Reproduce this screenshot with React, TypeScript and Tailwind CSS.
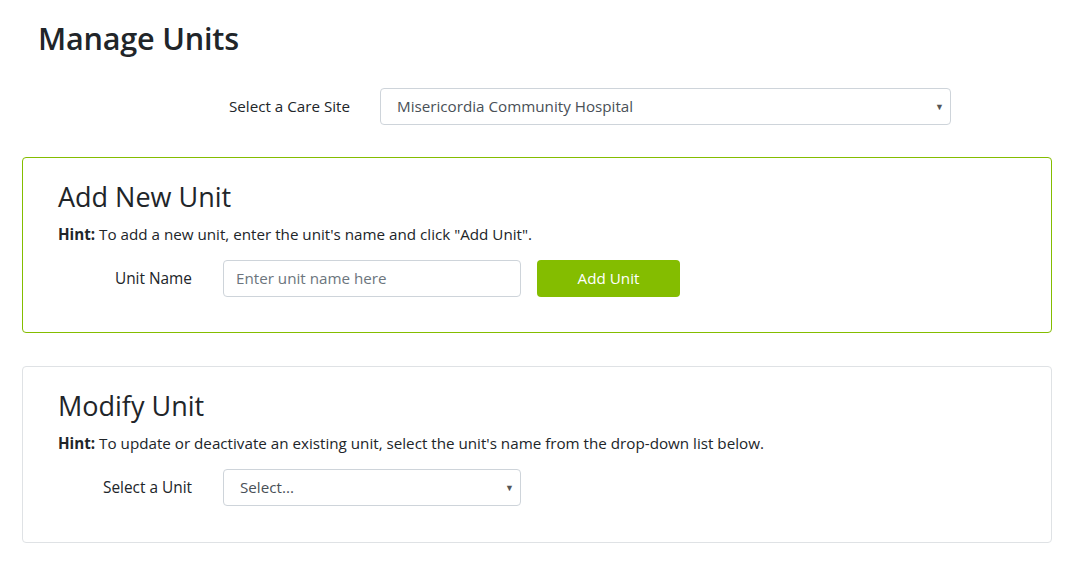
import React from 'react';

const FONT = { fontFamily: '"Open Sans", "Noto Sans", Arial, sans-serif' };

function Caret() {
  return <span className="pointer-events-none absolute right-[7px] top-1/2 -translate-y-1/2 text-[9px] text-[#555]">▼</span>;
}

export default function App() {
  return (
    <div className="min-h-screen bg-white text-[#212529] pl-[22px] pr-[28px] pt-[18px]" style={FONT}>
      <h2 className="pl-[16px] text-[30.6px] font-semibold leading-[40px] tracking-[-0.2px]">Manage Units</h2>

      <div className="mt-[30px] flex items-center">
        <label className="w-[328px] text-right text-[15.2px]">Select a Care Site</label>
        <div className="relative ml-[30px] w-[571px]">
          <div className="h-[37px] rounded-[4px] border border-[#ced4da] pl-[16px] text-[15.2px] leading-[35px] text-[#495057]">
            Misericordia Community Hospital
          </div>
          <Caret />
        </div>
      </div>

      <div className="mt-[32px] rounded-[4px] border border-[#84bd00] px-[35px] pt-[20px] pb-[35px]">
        <h3 className="text-[27px] leading-[38px] font-normal">Add New Unit</h3>
        <p className="mt-[8px] text-[15.2px] leading-[20px]">
          <b className="font-bold">Hint:</b> To add a new unit, enter the unit's name and click "Add Unit".
        </p>
        <div className="mt-[16px] flex items-center">
          <label className="w-[134px] text-right text-[15.4px]">Unit Name</label>
          <div className="ml-[31px] h-[37px] w-[298px] rounded-[4px] border border-[#ced4da] pl-[12px] text-[15.2px] leading-[35px] text-[#6c757d]">
            Enter unit name here
          </div>
          <button className="ml-[16px] h-[37px] w-[143px] rounded-[4px] bg-[#84bd00] text-[15.2px] text-white">Add Unit</button>
        </div>
      </div>

      <div className="mt-[33px] rounded-[4px] border border-[#dfe2e5] px-[35px] pt-[20px] pb-[36px]">
        <h3 className="text-[27px] leading-[38px] font-normal">Modify Unit</h3>
        <p className="mt-[8px] text-[15.2px] leading-[20px]">
          <b className="font-bold">Hint:</b> To update or deactivate an existing unit, select the unit's name from the drop-down list below.
        </p>
        <div className="mt-[16px] flex items-center">
          <label className="w-[134px] text-right text-[15.4px]">Select a Unit</label>
          <div className="relative ml-[31px] w-[298px]">
            <div className="h-[37px] rounded-[4px] border border-[#ced4da] pl-[16px] text-[15.2px] leading-[35px] text-[#495057]">
              Select...
            </div>
            <Caret />
          </div>
        </div>
      </div>
    </div>
  );
}
